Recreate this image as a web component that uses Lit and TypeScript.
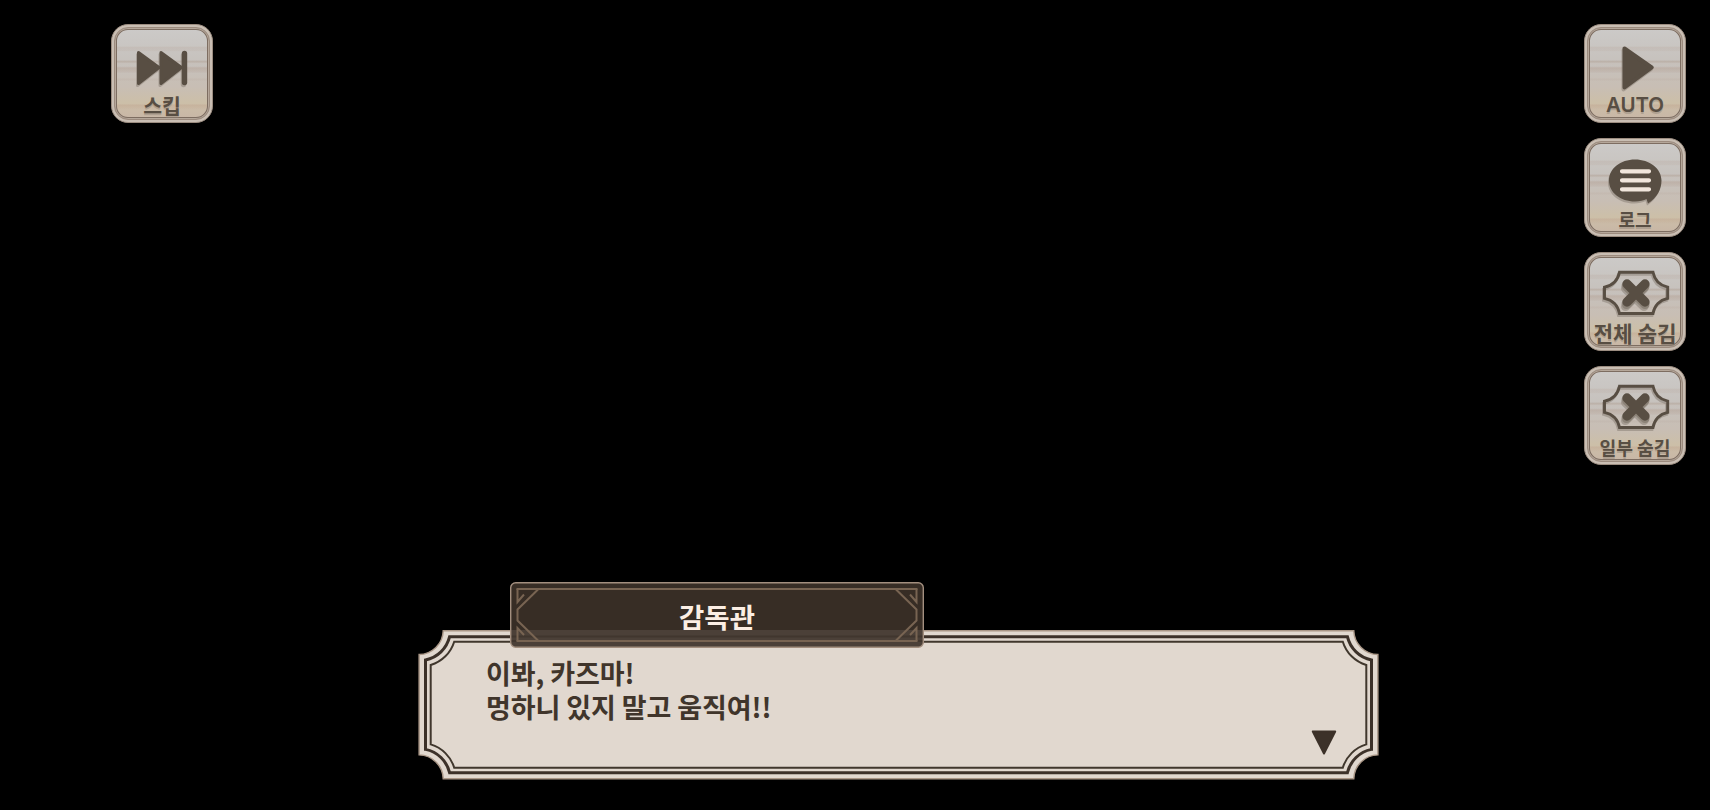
import {LitElement, css, html, svg} from 'lit';
import {customElement, property} from 'lit/decorators.js';

const frame = svg`
  <path d="M35.500 20.300H69Q71.500 32.500 83.700 35.200V46.300Q71.500 49 69 61.500H35.500Q33 49 20.500 46.300V35.200Q33 32.500 35.500 20.300Z"
    fill="none" stroke="#584e43" stroke-width="2.900"/>
  <path d="M42.500 34.500L61 52.500M61 34.500L42.500 52.500" stroke="#8c8378" stroke-width="9" stroke-linecap="round"/>
  <path d="M43 32L61 50M61 32L43 50" stroke="#584e43" stroke-width="9.300" stroke-linecap="round"/>`;

const icons: Record<string, unknown> = {
  skip: svg`
    <g stroke="#584e43" fill="#584e43" stroke-width="3" stroke-linejoin="round" stroke-linecap="round">
      <path d="M27.500 28.500V59.500L48 43.500Z"/>
      <path d="M50 28.500V59.500L70.500 43.500Z"/>
      <path d="M73.500 29.500V58.500" stroke-width="5.400"/>
    </g>`,
  auto: svg`<path d="M40.500 24.500V63.500L67.700 43.500Z" fill="#584e43" stroke="#584e43" stroke-width="4" stroke-linejoin="round"/>`,
  log: svg`
    <path d="M51 21.500C65.500 21.500 77.500 30.500 77.500 42.500C77.500 51.500 73 59.500 64 65.500L62.500 61C60 62.500 55.500 63.500 51 63.500C36.500 63.500 25 54.500 25 42.500C25 30.500 36.500 21.500 51 21.500Z" fill="#584e43"/>
    <path d="M38 33.300H65M38 42.300H65M38 51.300H65" stroke="#f1e6dc" stroke-width="4.200" stroke-linecap="round"/>`,
  hide: frame,
};

@customElement('menu-button')
export class MenuButton extends LitElement {
  static styles = css`
    :host {
      display: block;
      width: 102px;
      height: 99px;
      box-sizing: border-box;
      padding: 2px;
      border: 1px solid #9b8c80;
      border-radius: 17px;
      background: #c9beb3;
    }
    button {
      display: grid;
      grid-template-rows: 100%;
      grid-template-columns: 100%;
      width: 100%;
      height: 100%;
      padding: 0;
      box-sizing: border-box;
      border: 1px solid #9c8b7e;
      border-radius: 14px;
      background:
        linear-gradient(#0000 20%, #b0988a30 21%, #b0988a20 25%, #0000 26%, #0000 35%, #a8948460 37%, #c8bcb430 39%, #c8bcb400 42%, #b0988a60 44%, #b0988a30 48%, #0000 50%, #0000 55%, #b0988a28 56%, #0000 59%, #0000 83%, #b88f7838 85%, #b88f7818 88%, #0000 90%),
        linear-gradient(#cccac8, #c6c1bc 40%, #c8beb4 65%, #ccbfa8 82%, #c8b6a6);
      box-shadow: inset 0 0 0 1px #b5a79a, inset 0 0 0 2px #7d6d61;
    }
    svg {
      grid-area: 1 / 1;
      width: 102px;
      height: 99px;
      margin: -4px;
      filter: drop-shadow(-1px 2px 0 #847a7080);
    }
    span {
      grid-area: 1 / 1;
      align-self: end;
      justify-self: center;
      padding-bottom: 2px;
      white-space: nowrap;
      color: #584e43;
      font: 700 20.500px/24px 'Noto Sans CJK KR', sans-serif;
      text-shadow: 0 2px 0 #8d827670;
    }
    .auto {
      font: 600 20.500px/24px Inter, sans-serif;
    }
    .log {
      font-size: 18px;
    }
    .all {
      font-size: 21.300px;
    }
    .part {
      font-size: 18.200px;
    }
  `;

  @property() icon = '';
  @property() kind = '';
  @property() label = '';

  render() {
    return html`<button>
      <svg viewBox="0 0 102 99">${icons[this.icon]}</svg>
      <span class=${this.kind}>${this.label}</span>
    </button>`;
  }
}

@customElement('name-plate')
export class NamePlate extends LitElement {
  static styles = css`
    :host {
      display: grid;
      width: 414px;
      height: 66px;
      box-sizing: border-box;
    }
    svg, span {
      grid-area: 1 / 1;
    }
    span {
      place-self: center;
      color: #fbeee4;
      font: 700 27.500px/40px 'Noto Sans CJK KR', sans-serif;
      padding-top: 1px;
    }
  `;

  @property() name = '';

  corner() {
    return svg`<path d="M28 7.500L7.500 27.500V38.500L28 58.500M7.500 7V20L14 12.500M7.500 59V46L14 53"/>`;
  }

  render() {
    return html`
      <svg width="414" height="66">
        <rect x=".7" y=".7" width="412.600" height="64.600" rx="5" fill="#372d25"/>
        <path d="M1 48H413V60Q413 65 408 65H6Q1 65 1 60Z" fill="#4b4038"/>
        <path d="M1 54.500H413M1 59H413" stroke="#41362e" stroke-width="2"/>
        <rect x=".7" y=".7" width="412.600" height="64.600" rx="5" fill="none" stroke="#a38f7f" stroke-width="1.400"/>
        <g fill="none" stroke="#786452" stroke-width="2">
          <path d="M6.500 7H407.500M6.500 59H407.500"/>
          ${this.corner()}
          <g transform="matrix(-1 0 0 1 414 0)">${this.corner()}</g>
        </g>
      </svg>
      <span>${this.name}</span>`;
  }
}

@customElement('dialog-box')
export class DialogBox extends LitElement {
  static styles = css`
    :host {
      display: grid;
      position: relative;
      width: 961px;
      height: 150px;
    }
    svg, .lines {
      grid-area: 1 / 1;
    }
    .lines {
      padding: 26px 0 0 68px;
      color: #40352b;
      font: 700 27px/33.500px 'Noto Sans CJK KR', sans-serif;
      letter-spacing: -.1px;
      white-space: pre;
    }
    name-plate {
      position: absolute;
      left: 92px;
      top: -48px;
    }
  `;

  @property() name = '';
  @property({type: Array}) lines: string[] = [];

  // panel outline with concave corners, inset from the edges
  outline(x: number, y: number, cx: number, cy: number, r: number) {
    const w = 961;
    const h = 149.4;
    return `M${cx} ${y}H${w - cx}A${r} ${r} 0 0 0 ${w - x} ${cy}V${h - cy}A${r} ${r} 0 0 0 ${w - cx} ${h - y}H${cx}A${r} ${r} 0 0 0 ${x} ${h - cy}V${cy}A${r} ${r} 0 0 0 ${cx} ${y}Z`;
  }

  render() {
    return html`
      <svg width="961" height="150">
        <path d=${this.outline(1.1, 0.7, 25.2, 24.5, 24.5)} fill="#e1d8cf" stroke="#a99686" stroke-width="1.400"/>
        <path d=${this.outline(7.5, 6.7, 31.6, 30, 31)} fill="none" stroke="#3c3129" stroke-width="3"/>
        <path d=${this.outline(12.7, 11.7, 36.2, 35, 35)} fill="none" stroke="#40372d" stroke-width="2"/>
        <path d="M894.800 101.500H917.200L906 123.500Z" fill="#3c3129" stroke="#3c3129" stroke-width="2" stroke-linejoin="round"/>
      </svg>
      <div class="lines">${this.lines.join('\n')}</div>
      <name-plate .name=${this.name}></name-plate>`;
  }
}

@customElement('app-root')
export class AppRoot extends LitElement {
  static styles = css`
    :host {
      display: flex;
      flex-direction: column;
      justify-content: space-between;
      width: 1710px;
      height: 810px;
      box-sizing: border-box;
      padding: 24px 24px 30px 111px;
      background: #000;
      overflow: hidden;
    }
    .controls {
      display: flex;
      justify-content: space-between;
    }
    .side {
      display: flex;
      flex-direction: column;
      gap: 15px;
    }
    dialog-box {
      margin-left: 307px;
    }
  `;

  render() {
    return html`
      <div class="controls">
        <menu-button icon="skip" label="스킵"></menu-button>
        <div class="side">
          <menu-button icon="auto" kind="auto" label="AUTO"></menu-button>
          <menu-button icon="log" kind="log" label="로그"></menu-button>
          <menu-button icon="hide" kind="all" label="전체 숨김"></menu-button>
          <menu-button icon="hide" kind="part" label="일부 숨김"></menu-button>
        </div>
      </div>
      <dialog-box .name=${'감독관'} .lines=${['이봐, 카즈마!', '멍하니 있지 말고 움직여!!']}></dialog-box>`;
  }
}
